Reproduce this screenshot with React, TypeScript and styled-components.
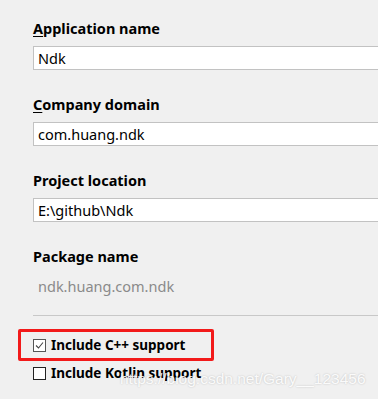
import React, { FunctionComponent } from "react"
import styled, { createGlobalStyle } from "styled-components"

const GlobalStyle = createGlobalStyle`
  html, body {
    margin: 0;
    padding: 0;
    background: #f0f0f0;
  }
  body {
    font-family: "Noto Sans", "Open Sans", sans-serif;
    color: #000;
  }
`

const Page = styled.div`
  position: relative;
  width: 378px;
  height: 399px;
  overflow: hidden;
  padding: 18px 0 0 33px;
  box-sizing: border-box;
`

const Form = styled.div`
  display: flex;
  flex-direction: column;
  gap: 24px;
`

const Field = styled.div`
  display: flex;
  flex-direction: column;
  gap: 8px;
`

const Label = styled.div`
  font-size: 14.5px;
  font-weight: bold;
  line-height: 20px;
  height: 20px;
`

const Mnemonic = styled.span`
  text-decoration: underline;
  text-underline-offset: 2px;
`

const TextBox = styled.div`
  height: 24px;
  width: 400px;
  box-sizing: border-box;
  background: #fff;
  border: 1px solid #c2c2c2;
  padding: 0 0 0 4px;
  font-size: 14.5px;
  line-height: 22px;
`

const Value = styled.div`
  height: 24px;
  padding-left: 5px;
  font-size: 14.5px;
  line-height: 24px;
  color: #8a8a8a;
`

const Divider = styled.hr`
  margin: 17px 0 0 0;
  border: none;
  border-top: 1px solid #c8c8c8;
`

const Options = styled.div`
  display: flex;
  flex-direction: column;
  margin-top: 13px;
`

const Highlight = styled.div`
  margin-left: -15px;
  width: 196px;
  height: 32px;
  box-sizing: border-box;
  border: 3px solid #f21a1a;
  border-radius: 2px;
  padding-left: 12px;
  display: flex;
  align-items: center;
`

const OptionRow = styled.div`
  height: 24px;
  display: flex;
  align-items: center;
`

const Check = styled.span<{ checked?: boolean }>`
  width: 13px;
  height: 13px;
  box-sizing: border-box;
  border: 1px solid ${({ checked }) => (checked ? "#555" : "#222")};
  background: #fff;
  display: flex;
  align-items: center;
  justify-content: center;
  margin-right: 5px;
`

const OptionText = styled.span`
  font-size: 13.5px;
  font-weight: bold;
  line-height: 18px;
`

const Watermark = styled.div`
  position: absolute;
  left: 120px;
  top: 370px;
  font-family: "Liberation Sans", Arial, sans-serif;
  font-size: 15.5px;
  color: rgba(255, 255, 255, 0.92);
  text-shadow: 0 0 2px rgba(0, 0, 0, 0.22);
  white-space: nowrap;
  pointer-events: none;
`

const Tick = () => (
  <svg width="9" height="9" viewBox="0 0 9 9">
    <path d="M1 4.5 L3.5 7 L8 1.5" fill="none" stroke="#444" strokeWidth="1.1" />
  </svg>
)

const Option: FunctionComponent<{ checked?: boolean; label: string }> = ({ checked, label }) => (
  <>
    <Check checked={checked}>{checked && <Tick />}</Check>
    <OptionText>{label}</OptionText>
  </>
)

const App: FunctionComponent = () => (
  <Page>
    <GlobalStyle />
    <Form>
      <Field>
        <Label>
          <Mnemonic>A</Mnemonic>pplication name
        </Label>
        <TextBox>Ndk</TextBox>
      </Field>
      <Field>
        <Label>
          <Mnemonic>C</Mnemonic>ompany domain
        </Label>
        <TextBox>com.huang.ndk</TextBox>
      </Field>
      <Field>
        <Label>Project location</Label>
        <TextBox>E:\github\Ndk</TextBox>
      </Field>
      <Field>
        <Label>Package name</Label>
        <Value>ndk.huang.com.ndk</Value>
      </Field>
    </Form>
    <Divider />
    <Options>
      <Highlight>
        <Option checked label="Include C++ support" />
      </Highlight>
      <OptionRow>
        <Option label="Include Kotlin support" />
      </OptionRow>
    </Options>
    <Watermark>https://blog.csdn.net/Gary__123456</Watermark>
  </Page>
)

export default App
